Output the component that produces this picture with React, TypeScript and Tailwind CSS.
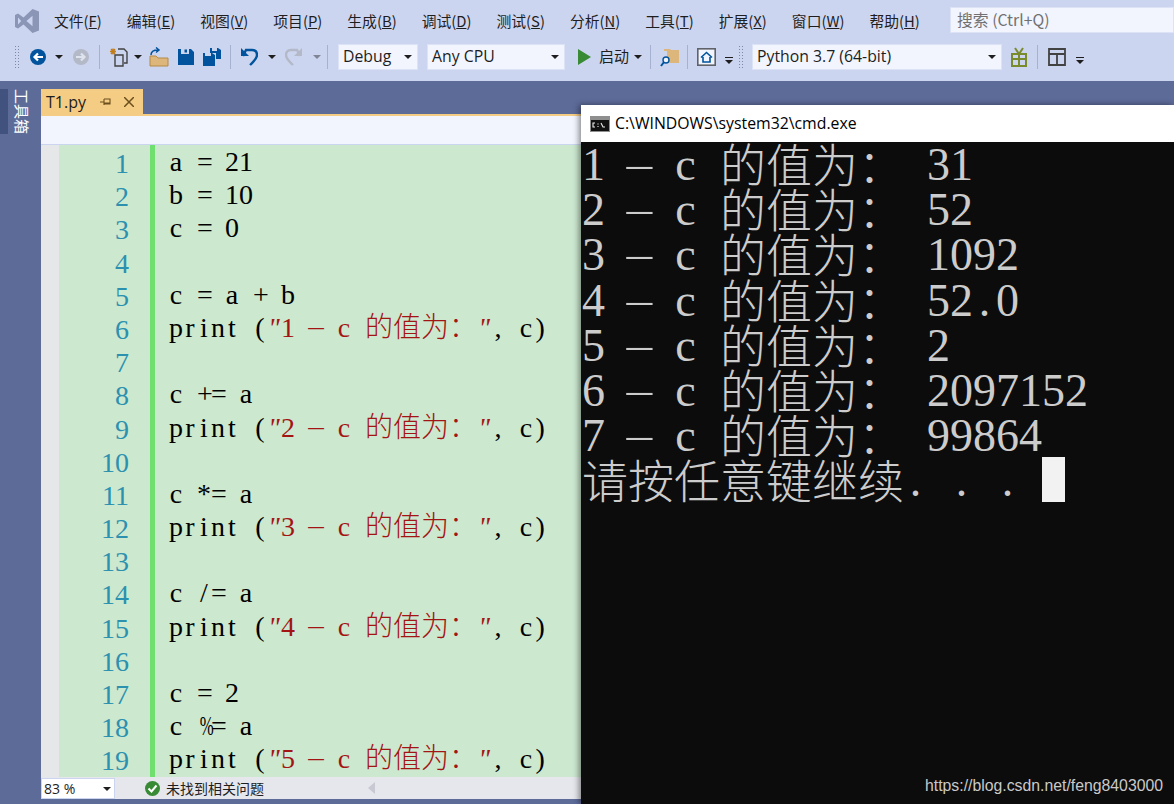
import React from "react";

const CJK = '"Noto Sans CJK SC"';
const isCjk = (c: string) => c.charCodeAt(0) > 0x2e80;

function Cell({ ch, big }: { ch: string; big: boolean }) {
  const extra =
    ch === "-"
      ? "scale-x-[2.2] scale-y-[0.6]"
      : ch === "%"
        ? "scale-x-[0.6]"
        : ch === '"'
          ? "italic"
          : "";
  return (
    <span className={`inline-block text-center ${big ? "w-[23px]" : "w-[14px]"} ${extra}`}>{ch === " " ? "\u00a0" : ch}</span>
  );
}

function Mixed({ text, big = false }: { text: string; big?: boolean }) {
  return (
    <>
      {Array.from(text).map((c, i) =>
        isCjk(c) ? (
          <span key={i} className={`font-light leading-[0] ${big ? "align-[-2px]" : ""}`} style={{ fontFamily: CJK }}>{c}</span>
        ) : (
          <Cell key={i} ch={c} big={big} />
        )
      )}
    </>
  );
}

function Code({ text }: { text: string }) {
  const m = text.match(/^print \((".*")(, c\))$/);
  if (!m) return <Mixed text={text} />;
  return (
    <>
      <Mixed text="print (" />
      <span className="text-[#a31515]"><Mixed text={m[1]} /></span>
      <Mixed text={m[2]} />
    </>
  );
}

const lines = [
  "a = 21", "b = 10", "c = 0", "", "c = a + b",
  'print ("1 - c 的值为：", c)', "", "c += a",
  'print ("2 - c 的值为：", c)', "", "c *= a",
  'print ("3 - c 的值为：", c)', "", "c /= a",
  'print ("4 - c 的值为：", c)', "", "c = 2", "c %= a",
  'print ("5 - c 的值为：", c)',
];

const output = [
  "1 - c 的值为： 31",
  "2 - c 的值为： 52",
  "3 - c 的值为： 1092",
  "4 - c 的值为： 52.0",
  "5 - c 的值为： 2",
  "6 - c 的值为： 2097152",
  "7 - c 的值为： 99864",
];

const menus: [string, string, string][] = [
  ["文件(", "F", ")"], ["编辑(", "E", ")"], ["视图(", "V", ")"], ["项目(", "P", ")"],
  ["生成(", "B", ")"], ["调试(", "D", ")"], ["测试(", "S", ")"], ["分析(", "N", ")"],
  ["工具(", "T", ")"], ["扩展(", "X", ")"], ["窗口(", "W", ")"], ["帮助(", "H", ")"],
];

function Caret({ className = "", color = "#1e1e1e" }: { className?: string; color?: string }) {
  return (
    <svg width="8" height="4" viewBox="0 0 8 4" className={`shrink-0 ${className}`}>
      <path d="M0 0h8L4 4z" fill={color} />
    </svg>
  );
}

function Sep({ className = "" }: { className?: string }) {
  return <div className={`w-px h-[24px] bg-[#a5b1d1] shrink-0 ${className}`} />;
}

function Grip({ className = "" }: { className?: string }) {
  return (
    <div className={`w-[6px] h-[24px] shrink-0 bg-[radial-gradient(#7d88a8_1px,transparent_1px)] [background-size:3px_3px] ${className}`} />
  );
}

function Combo({ label, className = "" }: { label: string; className?: string }) {
  return (
    <div className={`h-[26px] bg-[#f2f5fe] border border-[#dde3f6] flex items-center justify-between pl-[4px] pr-[5px] text-[15.8px] text-[#1e1e1e] shrink-0 ${className}`} style={{ fontFamily: '"Open Sans", sans-serif' }}>
      <span>{label}</span>
      <Caret />
    </div>
  );
}

const BLUE = "#00539c";

function Circle({ gray = false, className = "" }: { gray?: boolean; className?: string }) {
  return (
    <svg width="18" height="18" viewBox="0 0 18 18" className={`shrink-0 ${className}`}>
      <circle cx="9" cy="9" r="8" fill={gray ? "#b4b9c8" : BLUE} />
      {gray ? (
        <path d="M4 9h8M9 5.5 12.5 9 9 12.5" fill="none" stroke="#dfe3ee" strokeWidth="2.2" />
      ) : (
        <path d="M14 9H6M9 5.5 5.5 9 9 12.5" fill="none" stroke="#fff" strokeWidth="2.2" />
      )}
    </svg>
  );
}

function Floppy({ size = 16 }: { size?: number }) {
  return (
    <svg width={size} height={size} viewBox="0 0 16 16">
      <path d="M0 0h3v5h8V0h2l3 3v13H0z" fill={BLUE} />
      <rect x="6.5" y="0.5" width="2.5" height="3" fill={BLUE} />
    </svg>
  );
}

export default function App() {
  return (
    <div className="relative w-[1174px] h-[804px] overflow-hidden bg-[#5d6b99] flex flex-col" style={{ fontFamily: '"Noto Sans CJK SC", sans-serif' }}>
      {/* Title + toolbar */}
      <div className="h-[81px] shrink-0 bg-[#ccd5f0] flex flex-col">
        <div className="h-[42px] flex items-center shrink-0">
          <svg width="24" height="24" viewBox="0 0 24 24" className="ml-[15px] shrink-0">
            <path fillRule="evenodd" d="M17.5 0 24 2.6v18.8L17.5 24 8.5 15.4 3 19.6 0 18V6l3-1.6 5.5 4.2zM17.5 6.8 11.5 12l6 5.2zM3 8.6v6.8L6.2 12z" fill="#8b95b5" />
          </svg>
          <div className="ml-[15px] flex gap-[25px] text-[14.8px] text-[#1e1e1e] whitespace-nowrap">
            {menus.map(([a, b, c]) => (
              <span key={b}>{a}<span className="underline">{b}</span>{c}</span>
            ))}
          </div>
          <div className="ml-auto w-[224px] h-[26px] bg-[#f2f5fe] border border-[#dde3f6] flex items-center pl-[6px] text-[15.8px] text-[#717171] shrink-0 -mt-[2px]">
            搜索 (Ctrl+Q)
          </div>
        </div>
        <div className="h-[29px] flex items-center shrink-0">
          <Grip className="ml-[14px]" />
          <Circle className="ml-[9px]" />
          <Caret className="ml-[8px]" />
          <Circle gray className="ml-[9px]" />
          <Sep className="ml-[9px]" />
          {/* new project */}
          <svg width="20" height="20" viewBox="0 0 20 20" className="ml-[9px] shrink-0">
            <path d="M1 4.5h6M4 1.5v6M2 2l4 5M6 2 2 7" stroke="#c27d1a" strokeWidth="1.3" />
            <path d="M9 2h6l3 3v11h-3M6 8h8v11H6z" fill="#ccd5f0" stroke="#424242" strokeWidth="1.4" />
          </svg>
          <Caret className="ml-[5px]" />
          <svg width="20" height="20" viewBox="0 0 20 20" className="ml-[7px] shrink-0">
            <path d="M1 19V9h6l2 2h10v8z" fill="#dcb67a" stroke="#b58a45" />
            <path d="M2 8c0-4 3-5 7-5M7 0.5 10 3 7 5.5" fill="none" stroke={BLUE} strokeWidth="1.5" />
          </svg>
          <span className="ml-[9px] shrink-0 flex"><Floppy /></span>
          <svg width="18" height="18" viewBox="0 0 18 18" className="ml-[9px] shrink-0">
            <path d="M7 0h2v3h5V0h1l3 2v9h-5V5H7z" fill={BLUE} />
            <path d="M0 5h2v3h6V5h1l3 2v11H0z" fill={BLUE} />
          </svg>
          <Sep className="ml-[9px]" />
          <svg width="18" height="20" viewBox="0 0 18 20" className="ml-[9px] shrink-0">
            <path d="M3 9 6 3h6c4 0 5 3 5 5 0 4-4 7-7 10" fill="none" stroke={BLUE} strokeWidth="2.4" />
            <path d="M1 1v8h8z" fill={BLUE} />
          </svg>
          <Caret className="ml-[10px]" />
          <svg width="18" height="20" viewBox="0 0 18 20" className="ml-[9px] shrink-0">
            <path d="M15 9 12 3H6C2 3 1 6 1 8c0 4 4 7 7 10" fill="none" stroke="#b4b9c8" strokeWidth="2.4" />
            <path d="M17 1v8H9z" fill="#b4b9c8" />
          </svg>
          <Caret className="ml-[10px]" color="#7f8595" />
          <Sep className="ml-[6px]" />
          <Combo label="Debug" className="ml-[10px] w-[80px]" />
          <Combo label="Any CPU" className="ml-[9px] w-[138px]" />
          <svg width="13" height="16" viewBox="0 0 13 16" className="ml-[13px] shrink-0">
            <path d="M0 0 13 8 0 16z" fill="#388a34" />
          </svg>
          <span className="ml-[8px] w-[30px] text-[15px] text-[#1e1e1e] shrink-0">启动</span>
          <Caret className="ml-[5px]" />
          <Sep className="ml-[8px]" />
          <svg width="20" height="20" viewBox="0 0 20 20" className="ml-[9px] shrink-0">
            <path d="M4 4V2h6l1 1h8v13H7V4z" fill="#dcb67a" />
            <circle cx="6" cy="13" r="3" fill="#f2f5fe" stroke={BLUE} strokeWidth="1.4" />
            <path d="M4 15 1 19" stroke={BLUE} strokeWidth="2" />
          </svg>
          <Sep className="ml-[7px]" />
          <svg width="19" height="18" viewBox="0 0 19 18" className="ml-[9px] shrink-0">
            <rect x="0.8" y="0.8" width="17.4" height="16.4" fill="#f2f5fe" stroke="#5f6268" strokeWidth="1.6" />
            <path d="M4 9.5 9.5 4.5 15 9.5M6 9v5h7V9" fill="none" stroke={BLUE} strokeWidth="1.6" />
          </svg>
          <div className="ml-[9px] flex flex-col items-center gap-[2px] mt-[7px] shrink-0">
            <div className="w-[8px] h-px bg-[#1e1e1e]" />
            <Caret />
          </div>
          <Grip className="ml-[5px]" />
          <Combo label="Python 3.7 (64-bit)" className="ml-[8px] w-[250px]" />
          <svg width="16" height="20" viewBox="0 0 16 20" className="ml-[9px] shrink-0">
            <path d="M1 7h14v12H1zM8 7v12M1 12h14M8 7 4 1M8 7l4-6" fill="none" stroke="#7a8b2c" strokeWidth="2" />
          </svg>
          <Sep className="ml-[10px]" />
          <svg width="18" height="18" viewBox="0 0 18 18" className="ml-[10px] shrink-0">
            <path d="M1 1h16v16H1zM1 6h16M9 6v11" fill="none" stroke="#424242" strokeWidth="1.8" />
          </svg>
          <div className="ml-[10px] flex flex-col items-center gap-[2px] mt-[7px] shrink-0">
            <div className="w-[8px] h-px bg-[#1e1e1e]" />
            <Caret />
          </div>
        </div>
      </div>

      {/* Body */}
      <div className="flex-1 flex min-h-0">
        <div className="w-[41px] shrink-0 pt-[8px] flex items-start">
          <div className="w-[8px] h-[45px] bg-[#41527f]" />
          <div className="ml-[6px] h-[45px] text-[15px] leading-[16px] text-white [writing-mode:vertical-rl] [text-orientation:sideways]">工具箱</div>
        </div>
        <div className="flex-1 flex flex-col min-w-0 mt-[8px]">
          <div className="h-[25px] w-[102px] shrink-0 bg-[#f5cc84] flex items-center pl-[5px] text-[#1e1e1e]">
            <span className="text-[16px]" style={{ fontFamily: '"Open Sans", sans-serif' }}>T1.py</span>
            <svg width="12" height="12" viewBox="0 0 12 12" className="ml-[14px]">
              <path d="M0 6h4M4 3v6M4 3h6v5H4M4 7h6" fill="none" stroke="#6b4f1d" strokeWidth="1.1" />
            </svg>
            <svg width="10" height="10" viewBox="0 0 10 10" className="ml-[12px]">
              <path d="M0 0 10 10M10 0 0 10" stroke="#6b4f1d" strokeWidth="1.5" />
            </svg>
          </div>
          <div className="h-[2px] shrink-0 bg-[#f5cc84]" />
          <div className="h-[29px] shrink-0 bg-[#f2f5fe] border-b border-[#ccd5f0]" />
          <div className="h-[632px] shrink-0 flex bg-[#cce8cf]">
            <div className="w-[18px] shrink-0 bg-[#e6e7e8]" />
            <div className="w-[70px] shrink-0 text-right text-[#2b91af] text-[28px] leading-[33.2px] pt-[2px]" style={{ fontFamily: '"Liberation Serif", serif' }}>
              {lines.map((_, i) => (
                <div key={i} className="h-[33.2px]">{i + 1}</div>
              ))}
            </div>
            <div className="ml-[21px] w-[5px] shrink-0 bg-[#6fe06f]" />
            <div className="ml-[14px] flex-1 text-[28px] leading-[33.2px] text-black whitespace-pre" style={{ fontFamily: '"Liberation Serif", serif' }}>
              {lines.map((l, i) => (
                <div key={i} className="h-[33.2px]"><Code text={l} /></div>
              ))}
            </div>
          </div>
          <div className="h-[22px] shrink-0 bg-[#e6e7ed] flex items-center">
            <div className="w-[74px] h-[21px] self-end bg-white border border-[#ccd5f0] flex items-center justify-between pl-[2px] pr-[3px] text-[14px] text-[#1e1e1e]" style={{ fontFamily: '"Open Sans", sans-serif' }}>
              <span>83 %</span>
              <Caret />
            </div>
            <svg width="15" height="15" viewBox="0 0 15 15" className="ml-[30px]">
              <circle cx="7.5" cy="7.5" r="7.5" fill="#388a34" />
              <path d="M3.5 7.5 6.5 10.5 11.5 4.5" fill="none" stroke="#fff" strokeWidth="2" />
            </svg>
            <span className="ml-[6px] text-[14px] text-[#1e1e1e]">未找到相关问题</span>
            <svg width="7" height="12" viewBox="0 0 7 12" className="ml-[104px]">
              <path d="M7 0v12L0 6z" fill="#c8c9d2" />
            </svg>
          </div>
        </div>
      </div>

      {/* Console window */}
      <div className="absolute left-[581px] top-[105px] w-[593px] h-[699px] flex flex-col shadow-[-2px_0_6px_rgba(0,0,0,0.45)]">
        <div className="relative z-10 h-[37px] shrink-0 bg-white flex items-center pl-[9px] text-[15.8px] text-black" style={{ fontFamily: '"Open Sans", sans-serif' }}>
          <svg width="20" height="16" viewBox="0 0 20 16" className="shrink-0">
            <rect width="20" height="16" fill="#8f8f8f" />
            <rect x="1" y="4" width="18" height="11" fill="#111" />
            <path d="M5 7H3v4h2M8 7.5v1M8 10v1M11 7l2 4h2" fill="none" stroke="#eee" strokeWidth="1.1" />
          </svg>
          <span className="ml-[5px]">C:\WINDOWS\system32\cmd.exe</span>
        </div>
        <div className="flex-1 bg-[#0c0c0c] text-[#cccccc] text-[46px] leading-[46px] pl-[1px] whitespace-pre" style={{ fontFamily: '"Liberation Serif", serif' }}>
          {output.map((l) => (
            <div key={l} className="h-[45.2px]"><Mixed text={l} big /></div>
          ))}
          <div className="h-[45.2px] flex items-start">
            <span><Mixed text="请按任意键继续. . . " big /></span>
            <div className="w-[23px] h-[45px] -mt-[1px] bg-[#f2f2f2] shrink-0" />
          </div>
        </div>
      </div>

      {/* Watermark */}
      <div className="absolute left-[925px] top-[774px] text-[15.8px] text-[#c9c9c9] whitespace-nowrap" style={{ fontFamily: '"Liberation Sans", sans-serif' }}>
        https://blog.csdn.net/feng8403000
      </div>
    </div>
  );
}
